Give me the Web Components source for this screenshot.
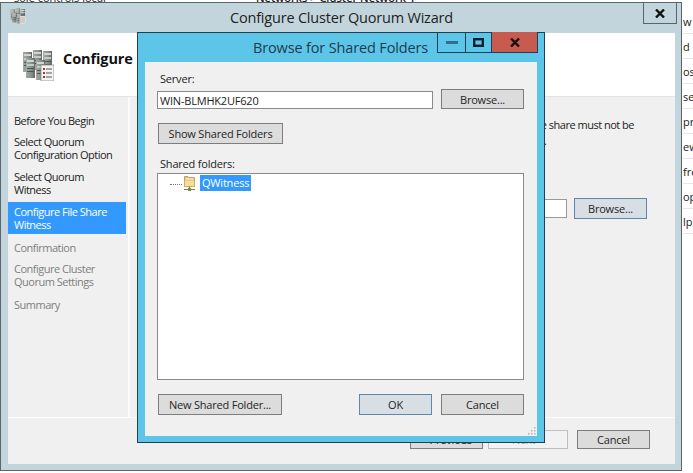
<!DOCTYPE html>
<html lang="en"><head><meta charset="utf-8"><title>Configure Cluster Quorum Wizard</title>
<style>
html,body{margin:0;padding:0;width:693px;height:473px;overflow:hidden;background:#fff;font:11px/13px "Open Sans",sans-serif;color:#1c1c1c}
</style></head><body>
<desk-top>
  <wizard-window>
    <wizard-nav slot="nav"></wizard-nav>
  </wizard-window>
  <browse-dialog></browse-dialog>
</desk-top>
<script>
const mk=(name,html,init)=>customElements.define(name,class extends HTMLElement{
  connectedCallback(){ if(this.shadowRoot) return; this.attachShadow({mode:'open'}).innerHTML=html(this); init&&init(this); }
});
const btnStyle=`:host{display:inline-flex;box-sizing:border-box;align-items:center;justify-content:center;height:21px;border:1px solid #7d7d7d;background:#dcdcdc;color:#262626;font:11px/13px "Open Sans",sans-serif;letter-spacing:-.2px;white-space:nowrap}
:host([primary]){border-color:#5f88a8;background:#d8dfe4}
:host([disabled]){border-color:#bfbfbf;background:#f2f2f2;color:#a8a8a8}`;
mk('win-button',()=>`<style>${btnStyle}</style><slot></slot>`);

mk('cluster-icon',()=>`<style>:host{display:block;line-height:0}</style>
<svg width="100%" height="100%" viewBox="0 0 32 32">
<defs><linearGradient id="s" x1="0" x2="1"><stop offset="0" stop-color="#a3aba5"/><stop offset=".55" stop-color="#8a928e"/><stop offset="1" stop-color="#626967"/></linearGradient>
<g id="t"><rect width="9" height="20" fill="url(#s)"/><rect x="1" y="2" width="7" height="2" fill="#cfd6d2"/><rect x="1" y="6" width="7" height="2" fill="#c3cac6"/><rect x="1" y="10" width="7" height="1" fill="#4f5654"/><rect x="1" y="13" width="7" height="1" fill="#4f5654"/></g></defs>
<use href="#t" x="1" y="3"/><use href="#t" x="11" y="1"/><use href="#t" x="21" y="2"/>
<use href="#t" x="4" y="9"/><use href="#t" x="14" y="11"/>
<rect x="19" y="16" width="13" height="16" fill="#f4f4f2" stroke="#8a8f8c" stroke-width=".8"/>
<g fill="#a33a3a"><rect x="21" y="19" width="2" height="2"/><rect x="21" y="23" width="2" height="2"/><rect x="21" y="27" width="2" height="2"/></g>
<g fill="#555"><rect x="24" y="19.5" width="6" height="1"/><rect x="24" y="23.5" width="6" height="1"/><rect x="24" y="27.5" width="6" height="1"/></g>
</svg>`);

mk('share-folder',()=>`<style>:host{display:block;line-height:0}</style>
<svg width="13" height="16" viewBox="0 0 13 16">
<path d="M1.5 1.5h3.5l1 1h5.5v9H1.5z" fill="#e9c474" stroke="#b08f4c" stroke-width=".8"/>
<rect x="2.5" y="3.5" width="8" height="2" fill="#fdf6df"/>
<rect x="1.5" y="5" width="10" height="6.5" fill="#f7dd98" stroke="#c4a25c" stroke-width=".6"/>
<path d="M6.5 11.5V14M1 14.5h11" stroke="#8a7a45" stroke-width="1.2" fill="none"/>
<rect x="5" y="13" width="3" height="3" fill="#6f8f3a"/>
</svg>`);

mk('wizard-nav',()=>`<style>
:host{display:flex;flex-direction:column;gap:3px;box-sizing:border-box;width:120px;padding:14px 2px 0 0;background:#f0f0f0;font:11px/13px "Open Sans",sans-serif;letter-spacing:-.5px;color:#1c1c1c;white-space:nowrap}
div{padding:3px 4px 3px 6px}
.sel{background:#3399ff;color:#fff}.off{color:#7f7f7f}
.up{margin-top:-1px}.dn{margin-top:1px}
</style>
<div>Before You Begin</div><div class="up">Select Quorum<br>Configuration Option</div><div>Select Quorum<br>Witness</div>
<div class="sel">Configure File Share<br>Witness</div><div class="off dn">Confirmation</div><div class="off up">Configure Cluster<br>Quorum Settings</div><div class="off dn">Summary</div>`);

mk('wizard-window',()=>`<style>
:host{position:absolute;left:0;top:2px;width:682px;height:469px;box-sizing:border-box;border:1px solid #5b666c;background:#c3d5dc;display:grid;grid-template-rows:30px 1fr;padding:0 6px 6px 7px;font:11px/13px "Open Sans",sans-serif}
.title{display:grid;grid-template-columns:1fr auto;align-items:start;position:relative}
.tt{position:absolute;left:0;right:0;top:6px;text-align:center;font:14.5px/18px "Open Sans",sans-serif;color:#1e1e1e;letter-spacing:-.2px}
.ico{width:16px;height:16px;margin:5px 0 0 2px}
.x{position:relative;margin-right:-2px;width:34px;height:21px;box-sizing:border-box;border:1px solid #5b666c;border-top:0;display:flex;align-items:center;justify-content:center}
.body{background:#f0f0f0;display:grid;grid-template-rows:64px 1fr 47px;min-height:0}
.head{background:#fff;display:flex;align-items:flex-start;border-bottom:1px solid #e4e4e4;box-sizing:border-box;padding:16px 0 0 14px;gap:9px}
.head cluster-icon{width:32px;height:32px}
h1{margin:1px 0 0;font:700 14.5px/18px "Open Sans",sans-serif;color:#111;letter-spacing:-.1px;word-spacing:5px;white-space:nowrap}
.mid{display:grid;grid-template-columns:120px 1fr;gap:2px;background:#fbfbfb;min-height:0}
.main{background:#f0f0f0;display:flex;flex-direction:column;align-items:flex-end;padding:21px 0 0;color:#1c1c1c}
.p{margin-right:41px;white-space:nowrap;letter-spacing:-.5px}
.p2{margin:3px 128px 0 0;height:13px}
.row{display:flex;align-items:center;margin:51px 28px 0 0;gap:7px}
.in{width:60px;height:19px;box-sizing:border-box;background:#fff;border:1px solid #9a9a9a}
.row win-button{width:73px}
.foot{background:#f0f0f0;border-top:1px solid #fbfbfb;box-sizing:border-box;display:flex;justify-content:flex-end;gap:5px;padding:12px 25px 0 0;align-items:flex-start}
.foot win-button{height:19px}
</style>
<div class="title">
 <div class="ico"><cluster-icon></cluster-icon></div><div class="tt">Configure Cluster Quorum Wizard</div>
 <div class="x"><svg width="10" height="9" viewBox="0 0 10 9"><path d="M1 .5l8 8M9 .5l-8 8" stroke="#111" stroke-width="2.4"/></svg></div>
</div>
<div class="body">
 <div class="head"><cluster-icon></cluster-icon><h1>Configure File Share Witness</h1></div>
 <div class="mid"><slot name="nav"></slot>
  <div class="main"><div class="p">file share must not be</div><div class="p2">.</div>
   <div class="row"><div class="in"></div><win-button primary>Browse...</win-button></div></div></div>
 <div class="foot"><win-button style="width:73px">&lt; Previous</win-button><win-button disabled style="width:80px">Next &gt;</win-button><win-button style="width:73px;margin-left:4px">Cancel</win-button></div>
</div>`);

mk('browse-dialog',()=>`<style>
:host{position:absolute;left:137px;top:32px;width:408px;height:411px;box-sizing:border-box;border:1px solid #1f3f55;background:#5dc6e8;display:grid;grid-template-rows:29px 1fr;padding:0 7px 6px 7px;font:11px/13px "Open Sans",sans-serif;letter-spacing:-.2px;color:#222}
.bar{position:relative;text-align:center;font:14.5px/18px "Open Sans",sans-serif;padding-top:6px;color:#1d3b4e;letter-spacing:-.15px;padding-right:1px}
.btns{position:absolute;top:-1px;right:-1px;display:flex;height:21px;box-sizing:border-box;border:1px solid #1f3f55;border-top:0}
.btns div{height:20px;display:flex;align-items:center;justify-content:center;box-sizing:border-box}
.mn{width:28px;border-right:1px solid #1f3f55}.mx{width:26px;border-right:1px solid #1f3f55}.cl{width:45px;background:#c75b50}
.in{background:#f0f0f0;display:flex;flex-direction:column;padding:10px 13px 0;position:relative}
.lb{padding-left:2px}
.r1{display:flex;gap:8px;align-items:flex-end;margin-top:4px}
.tx{flex:1;margin-left:-1px;height:18px;box-sizing:border-box;background:#fff;border:1px solid #8a8a8a;padding:1px 2px;line-height:15px;color:#222}
.r1 win-button{width:83px;height:20px}
.show{width:125px;margin-top:14px}
.tree{margin:3px 0 0 -1px;height:207px;box-sizing:border-box;background:#fff;border:1px solid #8a8a8a;padding:1px 0 0 12px;display:flex;align-items:flex-start}
.dots{width:12px;margin-top:9px;border-top:1px dotted #777}
.sel{background:#3399ff;color:#fff;height:16px;padding:0 2px;line-height:16px;margin-left:4px}
share-folder{margin:0 0 0 1px}
.r3{display:flex;margin-top:14px;gap:9px}.sp{flex:1}
.grip{position:absolute;right:1px;bottom:1px;line-height:0}
</style>
<div class="bar">Browse for Shared Folders
 <div class="btns"><div class="mn"><svg width="12" height="3"><rect width="12" height="3" fill="#2f6f94"/></svg></div><div class="mx"><svg width="11" height="9"><rect x="1.2" y="1.2" width="8.6" height="6.6" fill="none" stroke="#06202f" stroke-width="2.4"/></svg></div><div class="cl"><svg width="10" height="9" viewBox="0 0 10 9"><path d="M1 .5l8 8M9 .5l-8 8" stroke="#1a0d0b" stroke-width="2.4"/></svg></div></div>
</div>
<div class="in">
 <div class="lb">Server:</div>
 <div class="r1"><div class="tx">WIN-BLMHK2UF620</div><win-button>Browse...</win-button></div>
 <win-button class="show">Show Shared Folders</win-button>
 <div class="lb" style="margin-top:13px">Shared folders:</div>
 <div class="tree"><div class="dots"></div><share-folder></share-folder><div class="sel">QWitness</div></div>
 <div class="r3"><win-button style="width:124px">New Shared Folder...</win-button><div class="sp"></div><win-button primary style="width:73px">OK</win-button><win-button style="width:83px">Cancel</win-button></div>
 <svg class="grip" width="9" height="9" viewBox="0 0 9 9" fill="#b5b5b5"><rect x="7" y="1" width="1.5" height="1.5"/><rect x="4" y="4" width="1.5" height="1.5"/><rect x="7" y="4" width="1.5" height="1.5"/><rect x="1" y="7" width="1.5" height="1.5"/><rect x="4" y="7" width="1.5" height="1.5"/><rect x="7" y="7" width="1.5" height="1.5"/></svg>
</div>`);

mk('desk-top',()=>{
 const rows=['w','d','ose','sev','pre','ew','fre','op','lp'].map(t=>`<div class="cell">${t}</div>`).join('');
 return `<style>
:host{display:block;position:relative;width:693px;height:473px;overflow:hidden;background:#fff;font:11px/13px "Open Sans",sans-serif;color:#222}
.side{position:absolute;left:683px;right:0;top:9px;display:flex;flex-direction:column;overflow:hidden;width:10px}
.cell{height:25px;box-sizing:border-box;border-bottom:1px solid #e6e6e6;padding-top:6px;white-space:nowrap;width:30px}
.edge{position:absolute;left:0;right:0;height:2px;overflow:hidden;white-space:nowrap}
.edge span{position:absolute;top:-9px}
.b{top:471px}.b span{top:-1px}
</style>
<div class="edge"><span style="left:14px">sole controls local</span><span style="left:256px;font-weight:600">Networks &gt; Cluster Network 1</span></div>
<slot></slot>
<div class="side">${rows}</div>
<div class="edge b"><span style="left:278px">Items</span><span style="left:372px">Information</span></div>`;
});
</script>
</body></html>
